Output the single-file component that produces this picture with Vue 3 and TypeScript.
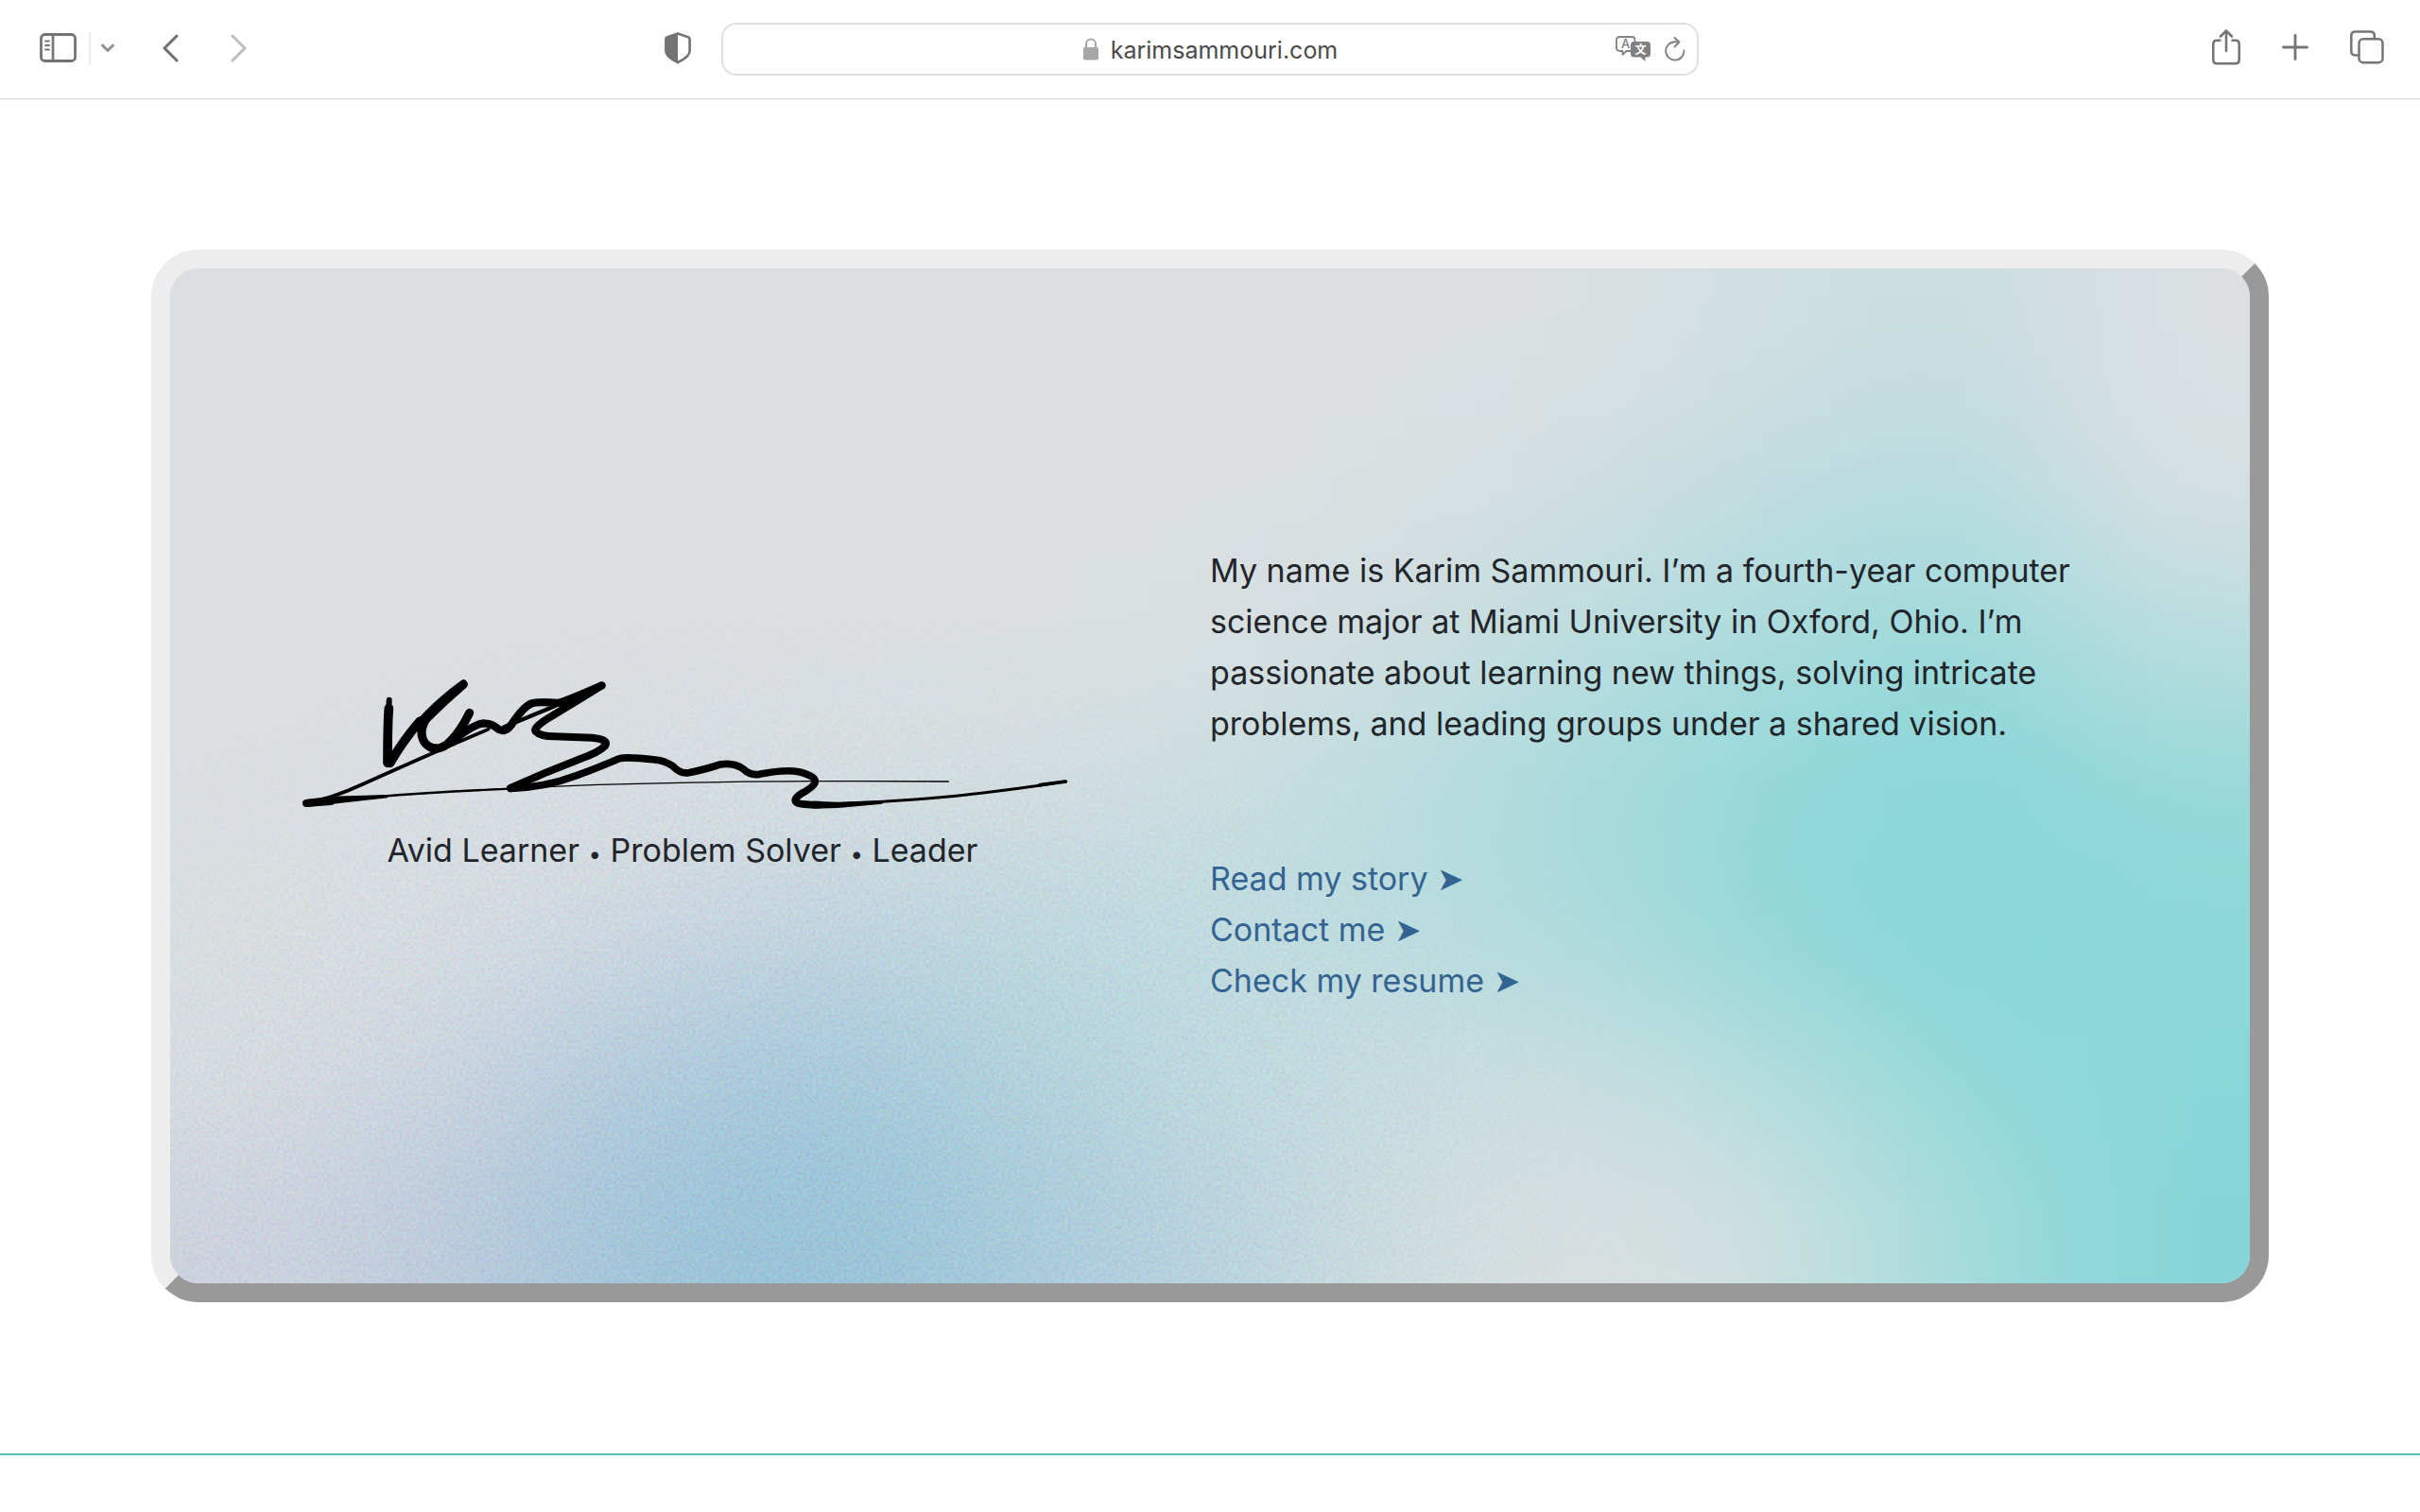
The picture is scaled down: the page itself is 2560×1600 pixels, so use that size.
<script setup lang="ts">
interface Cell {
  x: number
  y: number
  w: number
  h: number
  fill: string
}

const links: { label: string; href: string }[] = [
  { label: 'Read my story', href: '#story' },
  { label: 'Contact me', href: '#contact' },
  { label: 'Check my resume', href: '#resume' },
]

// Colour mesh of the card background, blurred into a smooth gradient.
const mesh: string[] = [
  'dbdfe2 dbdfe2 dbdfe2 dbdfe2 dbdfe2 dbdfe2 dbdfe2 dbdfe1 cedfe0 c8dde0 dbdfe2',
  'dbdfe2 dbdfe2 dbdfe2 dbdfe2 dbdfe2 dbdfe2 dadfe1 cfdee0 c0dce0 b6dce0 d7dfe1',
  'dbdfe2 dbdfe2 dbdfe2 dbdfe2 dbdfe1 d9dfe1 cfdddf bcdddf abdbdd 9bd9da bbdddf',
  'dbdfe2 dbdfe2 dbdfe2 d9e0e1 d7dfe1 cddfe0 bbdddf a7dadc 94d8da 88d5d9 99d9da',
  'dbdfe1 dadfe2 d0d9e1 c3d5e0 bfd9df c1dde0 bbdddf abdbdc 92d7d9 85d5d9 8cd7d9',
  'dadee1 cdd5e0 b0cadd a2c8db b0d2dc c0dbdf c9dde0 c8dfdf b0dcdd 92d8d9 8ad7da',
  'cfd3de bbcadc 9bc3d9 91c1d7 a5cadb b9d3df cfdfdf dbdfe1 ccdfdf a3dbdb 86d5d9',
]

const CW = 200
const CH = 154
const PAD = 400

const cells: Cell[] = mesh.flatMap((line, r) => {
  const row = line.split(' ')
  return row.map((hex, c) => {
    const left = c === 0 ? PAD : 0
    const right = c === row.length - 1 ? PAD : 1
    const top = r === 0 ? PAD : 0
    const bottom = r === mesh.length - 1 ? PAD : 1
    return {
      x: c * CW - left,
      y: r * CH - top,
      w: CW + left + right,
      h: CH + top + bottom,
      fill: '#' + hex,
    }
  })
})
</script>

<template>
  <div class="page">
    <header class="toolbar">
      <div class="group group-left">
        <button class="tool sidebar" type="button" aria-label="Sidebar">
          <svg width="40" height="32" viewBox="0 0 40 32" fill="none" stroke="#737373">
            <rect x="1.5" y="1.5" width="36" height="28" rx="4" stroke-width="2.8" />
            <path d="M14 2v27" stroke-width="2.6" />
            <path d="M6 8.500h4M6 13h4M6 17.500h4" stroke-width="1.800" stroke-linecap="round" />
          </svg>
        </button>
        <span class="divider"></span>
        <button class="tool menu" type="button" aria-label="Tab groups">
          <svg width="16" height="12" viewBox="0 0 16 12" fill="none" stroke="#8e8e93" stroke-width="2.800" stroke-linecap="round" stroke-linejoin="round">
            <path d="M2.500 3L8 8.500 13.500 3" />
          </svg>
        </button>
        <button class="tool back" type="button" aria-label="Back">
          <svg width="18" height="30" viewBox="0 0 18 30" fill="none" stroke="#6f6f6f" stroke-width="3" stroke-linecap="round" stroke-linejoin="round">
            <path d="M15 2L2 15l13 13" />
          </svg>
        </button>
        <button class="tool forward" type="button" aria-label="Forward">
          <svg width="18" height="30" viewBox="0 0 18 30" fill="none" stroke="#bdbdbd" stroke-width="3" stroke-linecap="round" stroke-linejoin="round">
            <path d="M2 2l13 13L2 28" />
          </svg>
        </button>
        <button class="tool shield" type="button" aria-label="Privacy report">
          <svg width="28" height="34" viewBox="0 0 28 34">
            <path d="M14 1.500L25.500 5.500Q26.600 6 26.600 7.500V20Q26.600 26 14 32Q1.400 26 1.400 20V7.500Q1.400 6 2.500 5.500Z" fill="none" stroke="#737373" stroke-width="2.600" stroke-linejoin="round" />
            <path d="M14 1L2 5.500V21Q2 26 14 32.500Z" fill="#737373" />
          </svg>
        </button>
      </div>

      <div class="address">
        <div class="site">
          <label for="url">
            <svg width="18" height="24" viewBox="0 0 18 24" aria-label="Website address">
              <rect x="1" y="10" width="16" height="13.500" rx="2" fill="#a6a6a6" />
              <path d="M4 11V6.500a5 5 0 0 1 10 0V11" fill="none" stroke="#a6a6a6" stroke-width="2" />
            </svg>
          </label>
          <input id="url" class="url" type="text" value="karimsammouri.com" />
        </div>
        <div class="actions">
          <button class="tool" type="button" aria-label="Translate">
            <svg width="38" height="28" viewBox="0 0 38 28">
              <path d="M4.500 1H17Q20.500 1 20.500 4.500V12.500Q20.500 16 17 16H11.500L7.500 19.800V16H4.500Q1 16 1 12.500V4.500Q1 1 4.500 1Z" fill="#fff" stroke="#808080" stroke-width="1.800" stroke-linejoin="round" />
              <text x="10.500" y="13" text-anchor="middle" class="glyph-a">A</text>
              <path d="M19.500 6H33.500Q37 6 37 9.500V19Q37 22.500 33.500 22.500H31.500V27L26.500 22.500H19.500Q16 22.500 16 19V9.500Q16 6 19.500 6Z" fill="#808080" />
              <text x="26.500" y="18.500" text-anchor="middle" class="glyph-b">文</text>
            </svg>
          </button>
          <button class="tool" type="button" aria-label="Reload">
            <svg width="22" height="26" viewBox="0 0 22 26" fill="none" stroke="#808080" stroke-width="1.900" stroke-linecap="round" stroke-linejoin="round">
              <path d="M20.500 14.500A9.700 9.700 0 1 1 10.800 5.200H14.500" />
              <path d="M10.500 1L15.300 5.500 10.500 10.500" />
            </svg>
          </button>
        </div>
      </div>

      <div class="group group-right">
        <button class="tool" type="button" aria-label="Share">
          <svg width="30" height="38" viewBox="0 0 30 38" fill="none" stroke="#757575" stroke-width="2.500" stroke-linecap="round" stroke-linejoin="round">
            <path d="M9.500 11.800H5Q1.300 11.800 1.300 15.500V32.500Q1.300 36.200 5 36.200H25Q28.700 36.200 28.700 32.500V15.500Q28.700 11.800 25 11.800H20.500" stroke-linecap="butt" />
            <path d="M15 23V1.500M9 7.500l6-6 6 6" />
          </svg>
        </button>
        <button class="tool" type="button" aria-label="New tab">
          <svg width="28" height="28" viewBox="0 0 28 28" fill="none" stroke="#757575" stroke-width="2.800" stroke-linecap="round">
            <path d="M14 1.500v25M1.500 14h25" />
          </svg>
        </button>
        <button class="tool" type="button" aria-label="Tab overview">
          <svg width="36" height="36" viewBox="0 0 36 36" fill="none" stroke="#757575" stroke-width="2.500">
            <rect x="9.500" y="9.300" width="25" height="25" rx="4.500" />
            <path d="M9.500 26.500H5.500Q1.300 26.500 1.300 22.200V5.800Q1.300 1.500 5.500 1.500H21.500Q25.800 1.500 25.800 5.800V9" />
          </svg>
        </button>
      </div>
    </header>

    <main class="hero">
      <section class="card">
        <svg class="backdrop" viewBox="0 0 2200 1074" preserveAspectRatio="none" aria-hidden="true">
          <defs>
            <filter id="soft" filterUnits="userSpaceOnUse" x="-400" y="-400" width="3000" height="1880" color-interpolation-filters="sRGB">
              <feGaussianBlur stdDeviation="92 72" />
            </filter>
            <filter id="grain" filterUnits="userSpaceOnUse" x="0" y="0" width="2200" height="1074" color-interpolation-filters="sRGB">
              <feTurbulence type="fractalNoise" baseFrequency="0.3" numOctaves="2" seed="4" />
              <feColorMatrix values="1 0 0 0 0.240  0 1 0 0 0.310  0 0 1 0 0.360  0 0 0 0 1" />
            </filter>
            <radialGradient id="grain-area" gradientUnits="userSpaceOnUse" cx="0" cy="0" r="1" gradientTransform="translate(640 960) scale(1000 640)">
              <stop offset="0" stop-color="#fff" />
              <stop offset="0.600" stop-color="#fff" stop-opacity="0.800" />
              <stop offset="1" stop-color="#fff" stop-opacity="0" />
            </radialGradient>
            <mask id="grain-mask">
              <rect width="2200" height="1074" fill="url(#grain-area)" />
            </mask>
          </defs>
          <g filter="url(#soft)">
            <rect v-for="(c, i) in cells" :key="i" :x="c.x" :y="c.y" :width="c.w" :height="c.h" :fill="c.fill" />
          </g>
          <g mask="url(#grain-mask)" class="grain">
            <rect width="2200" height="1074" filter="url(#grain)" />
          </g>
        </svg>

        <div class="intro">
          <svg class="signature" viewBox="21 45 2490 474" role="img" aria-label="Signature">
            <g fill="none" stroke="#000" stroke-linecap="round" stroke-linejoin="round">
              <path d="M335 122L334 150" stroke-width="18" />
              <path d="M334 148Q330 200 330 322" stroke-width="29" />
              <path d="M338 322Q380 250 432 190" stroke-width="29" />
              <path d="M571 73Q510 125 455 180Q425 222 448 258Q478 292 520 262Q560 225 590 163" stroke-width="27" />
              <path d="M430 195Q500 120 571 70" stroke-width="24" />
              <path d="M545 250L589 165" stroke-width="25" />
              <path d="M530 258Q600 200 635 196Q660 196 678 212Q700 230 722 202Q760 145 785 134Q805 126 870 132Q900 125 1010 76" stroke-width="25" />
              <path d="M1008 77Q960 108 850 174Q790 210 800 222Q815 238 860 238L980 242Q1035 248 1020 268Q1000 288 940 310Q830 352 720 402" stroke-width="24" />
              <path d="M720 403Q830 400 930 362Q1010 332 1065 308Q1090 302 1180 312Q1210 315 1235 332Q1260 358 1285 353Q1330 345 1385 327Q1430 320 1460 342Q1480 362 1510 358Q1590 342 1635 350Q1692 364 1686 385Q1680 400 1642 420Q1615 438 1628 448Q1645 455 1700 455" stroke-width="23" />
              <path d="M70 450Q150 436 250 390Q370 336 480 288L650 215" stroke-width="11" />
              <path d="M700 208L860 142" stroke-width="13" />
              <path d="M72 450L150 444" stroke-width="24" />
              <path d="M310 428Q620 405 1000 391Q1300 382 1680 380Q1900 379 2110 381" stroke-width="4" />
              <path d="M300 429Q480 414 720 404" stroke-width="7" />
              <path d="M1750 452Q1900 448 2100 430Q2300 410 2480 381" stroke-width="9" />
              <path d="M2400 392L2482 381" stroke-width="11" />
            </g>
            <path d="M70 438L150 428L330 423L330 433L70 462Z" />
            <path d="M1680 443L1760 446L1900 441L1900 452L1760 465L1680 467Z" />
            <path d="M860 132L1010 66L1000 92L900 155Z" />
          </svg>
          <p class="tagline">
            Avid Learner <span class="dot">•</span> Problem Solver <span class="dot">•</span> Leader
          </p>
        </div>

        <div class="about">
          <p class="bio">
            My name is Karim Sammouri. I’m a fourth-year computer science major at
            Miami University in Oxford, Ohio. I’m passionate about learning new
            things, solving intricate problems, and leading groups under a shared
            vision.
          </p>
          <nav class="links">
            <a v-for="link in links" :key="link.href" :href="link.href">{{ link.label }} <span class="arrow">➤</span></a>
          </nav>
        </div>
      </section>
    </main>
    <hr class="rule" />
  </div>
</template>

<style>
body {
  margin: 0;
  background: #fff;
}
</style>

<style scoped>
.page {
  min-height: 100vh;
  background: #fff;
  font-family: Inter, "Liberation Sans", sans-serif;
  color: #212529;
  overflow: hidden;
}

.toolbar {
  display: grid;
  grid-template-columns: 1fr minmax(0, 1034px) 1fr;
  align-items: center;
  height: 104px;
  border-bottom: 1px solid #d8d8d8;
}

.group {
  display: flex;
  align-items: center;
}

.group-left {
  padding: 0 32px 2px 42px;
}

.group-right {
  justify-content: flex-end;
  gap: 44px;
  padding: 0 38px 4px 32px;
}

.tool {
  display: flex;
  padding: 0;
  border: 0;
  background: none;
}

.tool svg {
  display: block;
}

.divider {
  width: 2px;
  height: 36px;
  margin: 0 10px 0 12px;
  background: #ececec;
}

.back {
  margin-left: 50px;
}

.forward {
  margin-left: 54px;
}

.shield {
  margin-left: auto;
}

.address {
  display: grid;
  grid-template-columns: 1fr auto 1fr;
  align-items: center;
  box-sizing: border-box;
  height: 56px;
  border: 2px solid #e0e0e0;
  border-radius: 16px;
}

.site {
  grid-column: 2;
  display: flex;
  align-items: center;
  gap: 12px;
}

.site svg {
  display: block;
}

.url {
  field-sizing: content;
  padding: 2px 0 0;
  margin: 0;
  border: 0;
  outline: 0;
  background: none;
  color: #4a4a4a;
  font-family: inherit;
  font-size: 25px;
  line-height: 32px;
}

.actions {
  display: flex;
  justify-content: flex-end;
  align-items: center;
  gap: 14px;
  padding-right: 12px;
}

.glyph-a {
  font-family: Inter, sans-serif;
  font-size: 13px;
  font-weight: 500;
  fill: #808080;
}

.glyph-b {
  font-family: "Noto Sans CJK SC", sans-serif;
  font-size: 12px;
  font-weight: 700;
  fill: #fff;
}

.hero {
  padding: 159px 160px 160px;
}

.card {
  position: relative;
  display: grid;
  grid-template-columns: 1fr 1fr;
  align-items: center;
  box-sizing: border-box;
  min-height: 1114px;
  border: 20px solid;
  border-color: #ededed #999 #999 #ededed;
  border-radius: 50px;
  background: #dbdfe2;
}

.backdrop {
  position: absolute;
  inset: 0;
  width: 100%;
  height: 100%;
  border-radius: 30px;
}

.grain {
  opacity: 0.16;
}

.intro,
.about {
  position: relative;
}

.intro {
  display: flex;
  flex-direction: column;
  align-items: center;
  padding-right: 16px;
}

.signature {
  width: 830px;
  max-width: 100%;
}

.tagline,
.bio {
  margin: 0;
  font-size: 34px;
  line-height: 54px;
}

.dot {
  font-size: 24px;
  line-height: 1;
}

.bio {
  max-width: 924px;
}

.links {
  display: flex;
  flex-direction: column;
  align-items: flex-start;
  margin-top: 110px;
  font-size: 34px;
  line-height: 54px;
}

.links a {
  color: #336391;
  text-decoration: none;
}

.arrow {
  font-family: "DejaVu Sans", sans-serif;
  line-height: 1;
}

.rule {
  height: 2px;
  margin: 0;
  border: 0;
  background: #5cbec0;
}
</style>
